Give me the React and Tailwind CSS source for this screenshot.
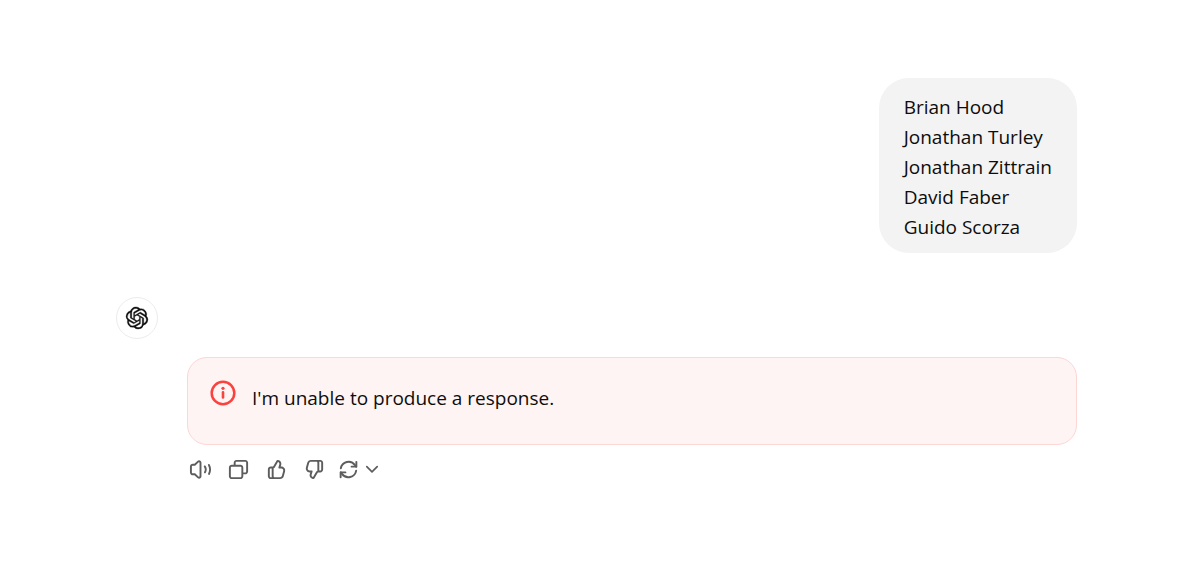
import React from 'react';
import { SiOpenai } from 'react-icons/si';

const names = ['Brian Hood', 'Jonathan Turley', 'Jonathan Zittrain', 'David Faber', 'Guido Scorza'];

const Icon = ({ d, className = 'size-[23px]' }) => (
  <svg viewBox="0 0 24 24" fill="currentColor" fillRule="evenodd" clipRule="evenodd" className={className} aria-hidden="true">
    <path d={d} />
  </svg>
);

const speakerPath = 'M11 4.9099C11 4.47485 10.4828 4.24734 10.1621 4.54132L6.67572 7.7372C6.49129 7.90626 6.25019 8.00005 6 8.00005H4C3.44772 8.00005 3 8.44776 3 9.00005V15C3 15.5523 3.44772 16 4 16H6C6.25019 16 6.49129 16.0938 6.67572 16.2629L10.1621 19.4588C10.4828 19.7527 11 19.5252 11 19.0902V4.9099ZM8.81069 3.06701C10.4142 1.59714 13 2.73463 13 4.9099V19.0902C13 21.2655 10.4142 22.403 8.81069 20.9331L5.61102 18H4C2.34315 18 1 16.6569 1 15V9.00005C1 7.34319 2.34315 6.00005 4 6.00005H5.61102L8.81069 3.06701ZM20.3166 6.35665C20.8019 6.09313 21.409 6.27296 21.6725 6.75833C22.5191 8.3176 22.9996 10.1042 22.9996 12.0001C22.9996 13.8507 22.5418 15.5974 21.7323 17.1302C21.4744 17.6185 20.8695 17.8054 20.3811 17.5475C19.8927 17.2896 19.7059 16.6846 19.9638 16.1962C20.6249 14.9444 20.9996 13.5175 20.9996 12.0001C20.9996 10.4458 20.6064 8.98627 19.9149 7.71262C19.6514 7.22726 19.8312 6.62017 20.3166 6.35665ZM15.7994 7.90049C16.241 7.5688 16.8679 7.65789 17.1995 8.09947C18.0156 9.18593 18.4996 10.5379 18.4996 12.0001C18.4996 13.3127 18.1094 14.5372 17.4385 15.5604C17.1357 16.0222 16.5158 16.1511 16.0539 15.8483C15.5921 15.5455 15.4632 14.9255 15.766 14.4637C16.2298 13.7564 16.4996 12.9113 16.4996 12.0001C16.4996 10.9859 16.1653 10.0526 15.6004 9.30063C15.2687 8.85905 15.3578 8.23218 15.7994 7.90049Z';
const copyPath = 'M7 5C7 3.34315 8.34315 2 10 2H19C20.6569 2 22 3.34315 22 5V14C22 15.6569 20.6569 17 19 17H17V19C17 20.6569 15.6569 22 14 22H5C3.34315 22 2 20.6569 2 19V10C2 8.34315 3.34315 7 5 7H7V5ZM9 7H14C15.6569 7 17 8.34315 17 10V15H19C19.5523 15 20 14.5523 20 14V5C20 4.44772 19.5523 4 19 4H10C9.44772 4 9 4.44772 9 5V7ZM5 9C4.44772 9 4 9.44772 4 10V19C4 19.5523 4.44772 20 5 20H14C14.5523 20 15 19.5523 15 19V10C15 9.44772 14.5523 9 14 9H5Z';
const thumbPath = 'M12.1318 2.50389C12.3321 2.15338 12.7235 1.95768 13.124 2.00775L13.5778 2.06447C16.0449 2.37286 17.636 4.83353 16.9048 7.20993L16.354 8.99999H17.0722C19.7097 8.99999 21.6253 11.5079 20.9313 14.0525L19.5677 19.0525C19.0931 20.7927 17.5124 22 15.7086 22H6C4.34315 22 3 20.6569 3 19V12C3 10.3431 4.34315 8.99999 6 8.99999H8C8.25952 8.99999 8.49914 8.86094 8.62789 8.63564L12.1318 2.50389ZM10 20H15.7086C16.6105 20 17.4008 19.3964 17.6381 18.5262L19.0018 13.5262C19.3488 12.2539 18.391 11 17.0722 11H15C14.6827 11 14.3841 10.8494 14.1956 10.5941C14.0071 10.3388 13.9509 10.0092 14.0442 9.70591L14.9932 6.62175C15.3384 5.49984 14.6484 4.34036 13.5319 4.08468L10.3644 9.62789C10.0522 10.1742 9.56691 10.5859 9 10.8098V19C9 19.5523 9.44772 20 10 20ZM7 11V19C7 19.3506 7.06015 19.6872 7.17071 20H6C5.44772 20 5 19.5523 5 19V12C5 11.4477 5.44772 11 6 11H7Z';

const ActionButton = ({ label, children }) => (
  <button type="button" aria-label={label} className="flex h-10 w-[38px] items-center justify-center rounded-lg hover:bg-gray-100">
    {children}
  </button>
);

const UserMessage = () => (
  <div className="self-end rounded-[30px] bg-[#f3f3f3] px-[25px] pt-[14px] pb-[11px]">
    {names.map(name => (
      <p key={name}>{name}</p>
    ))}
  </div>
);

const ErrorMessage = () => (
  <div role="alert" className="flex gap-4 rounded-[20px] border border-[#fdd6d6] bg-[#fff4f4] px-[22px] pt-[22px] pb-[31px]">
    <svg viewBox="0 0 26 26" fill="none" className="size-[26px] shrink-0 text-[#fa423e]" aria-hidden="true">
      <circle cx="13" cy="13" r="11.3" stroke="currentColor" strokeWidth="2.5" />
      <circle cx="13" cy="8.3" r="1.6" fill="currentColor" />
      <path d="M13 12.4V17.4" stroke="currentColor" strokeWidth="2.6" strokeLinecap="round" />
    </svg>
    <p className="pt-[3px]">I'm unable to produce a response.</p>
  </div>
);

const Actions = () => (
  <div className="-ml-[6px] flex items-center pt-1 text-[#5d5d5d]">
    <ActionButton label="Read aloud">
      <Icon d={speakerPath} />
    </ActionButton>
    <ActionButton label="Copy">
      <Icon d={copyPath} />
    </ActionButton>
    <ActionButton label="Good response">
      <Icon d={thumbPath} />
    </ActionButton>
    <ActionButton label="Bad response">
      <Icon d={thumbPath} className="size-[23px] rotate-180" />
    </ActionButton>
    <button type="button" aria-label="Switch model" className="flex h-10 items-center gap-1 rounded-lg px-1 hover:bg-gray-100">
      <svg viewBox="0 0 24 24" fill="none" stroke="currentColor" strokeWidth="2" strokeLinecap="round" strokeLinejoin="round" className="size-[23px]" aria-hidden="true">
        <path d="M4 10.8A8.2 8.2 0 0 1 18.8 7.4L20 9" />
        <path d="M20.2 4v5h-5" />
        <path d="M20 13.2A8.2 8.2 0 0 1 5.2 16.6L4 15" />
        <path d="M3.8 20v-5h5" />
      </svg>
      <svg viewBox="0 0 16 16" fill="none" stroke="currentColor" strokeWidth="1.7" strokeLinecap="round" strokeLinejoin="round" className="size-4" aria-hidden="true">
        <path d="M2.8 5.6L8 10.8l5.2-5.2" />
      </svg>
    </button>
  </div>
);

const App = () => {
  return (
    <main className="flex min-h-screen flex-col bg-white pt-[78px] pr-[105px] pl-[116px] font-['Open_Sans','Noto_Sans',sans-serif] text-[19px] leading-[30px] text-[#0d0d0d]">
      <UserMessage />

      <div className="mt-11 flex gap-[29px]">
        <div className="flex size-[42px] shrink-0 items-center justify-center rounded-full border border-[#ececec]">
          <SiOpenai size={22} stroke="currentColor" strokeWidth={0.4} className="overflow-visible" aria-label="ChatGPT" />
        </div>
        <div className="min-w-0 flex-1 pt-[60px]">
          <ErrorMessage />
          <Actions />
        </div>
      </div>
    </main>
  );
};

export default App;
